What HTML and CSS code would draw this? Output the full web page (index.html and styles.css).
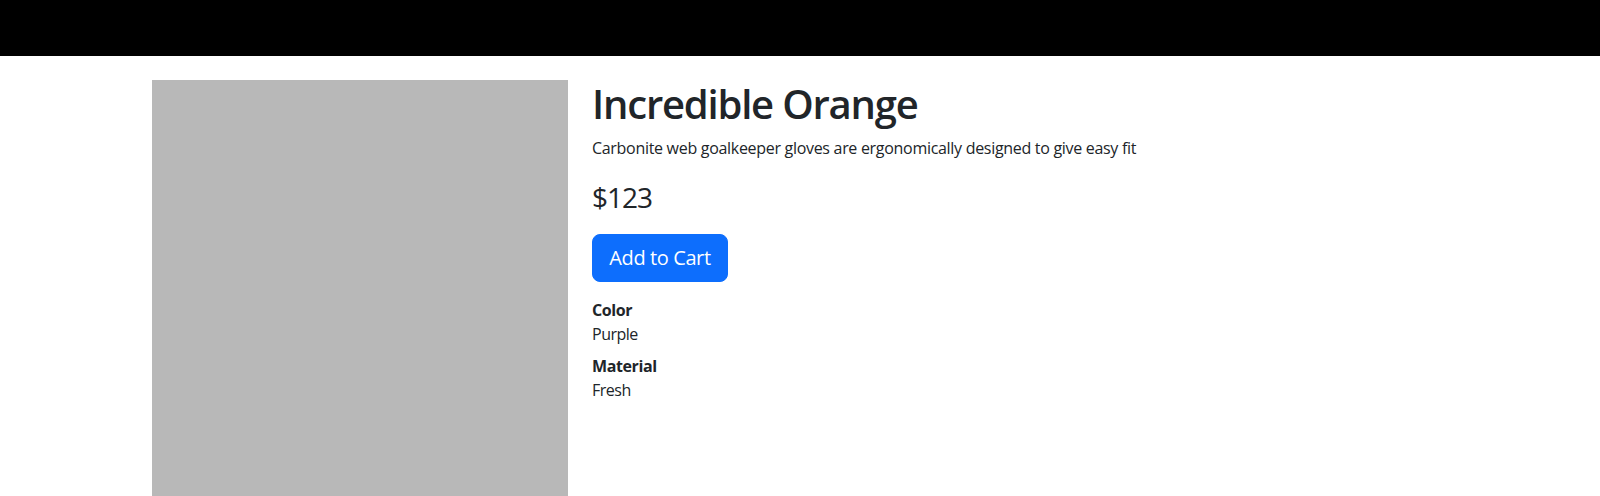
FILE: index.html
```html
<!DOCTYPE html>
<html lang="en">
<head>
<meta charset="utf-8">
<title>Incredible Orange</title>
<link rel="stylesheet" href="styles.css">
</head>
<body>
<header class="topbar"></header>
<main class="container">
  <div class="row">
    <div class="col-image">
      <div class="product-image"></div>
    </div>
    <div class="col-info">
      <h1 class="title">Incredible Orange</h1>
      <p class="description">Carbonite web goalkeeper gloves are ergonomically designed to give easy fit</p>
      <p class="price">$123</p>
      <button class="btn-cart" type="button">Add to Cart</button>
      <dl class="specs">
        <dt>Color</dt>
        <dd>Purple</dd>
        <dt>Material</dt>
        <dd>Fresh</dd>
      </dl>
    </div>
  </div>
</main>
</body>
</html>
```
FILE: styles.css
```css
* { box-sizing: border-box; }
html, body { margin: 0; padding: 0; overflow: hidden; }
body {
  font-family: "Open Sans", "Noto Sans", sans-serif;
  font-size: 16px;
  line-height: 1.5;
  color: #212529;
  background: #fff;
}
.topbar {
  height: 56px;
  background: #000;
}
.container {
  width: 1320px;
  margin: 24px auto 0;
  padding: 0 12px;
}
.row {
  display: flex;
  margin: 0 -12px;
}
.col-image {
  width: 440px;
  flex: 0 0 440px;
  padding: 0 12px;
}
.product-image {
  height: 416px;
  background: #b8b8b8;
}
.col-info {
  flex: 1;
  padding: 0 12px;
}
.title {
  margin: 0 0 8px;
  font-size: 40px;
  line-height: 48px;
  font-weight: 600;
  letter-spacing: -1.2px;
}
.description {
  margin: 0 0 16px;
  font-size: 16px;
  line-height: 24px;
  letter-spacing: -0.3px;
}
.price {
  margin: 0 0 16px;
  font-size: 28px;
  line-height: 42px;
  font-weight: 400;
  letter-spacing: -1px;
}
.btn-cart {
  display: block;
  width: 136px;
  height: 48px;
  margin: 0 0 16px;
  padding: 0;
  border: 1px solid #0d6efd;
  border-radius: 8px;
  background: #0d6efd;
  color: #fff;
  font-family: inherit;
  font-size: 20px;
  line-height: 30px;
  letter-spacing: -0.4px;
}
.specs {
  margin: 0 0 16px;
}
.specs dt {
  font-weight: 700;
  line-height: 24px;
  letter-spacing: -0.4px;
}
.specs dd {
  margin: 0 0 8px;
  line-height: 24px;
  letter-spacing: -0.5px;
}
```
